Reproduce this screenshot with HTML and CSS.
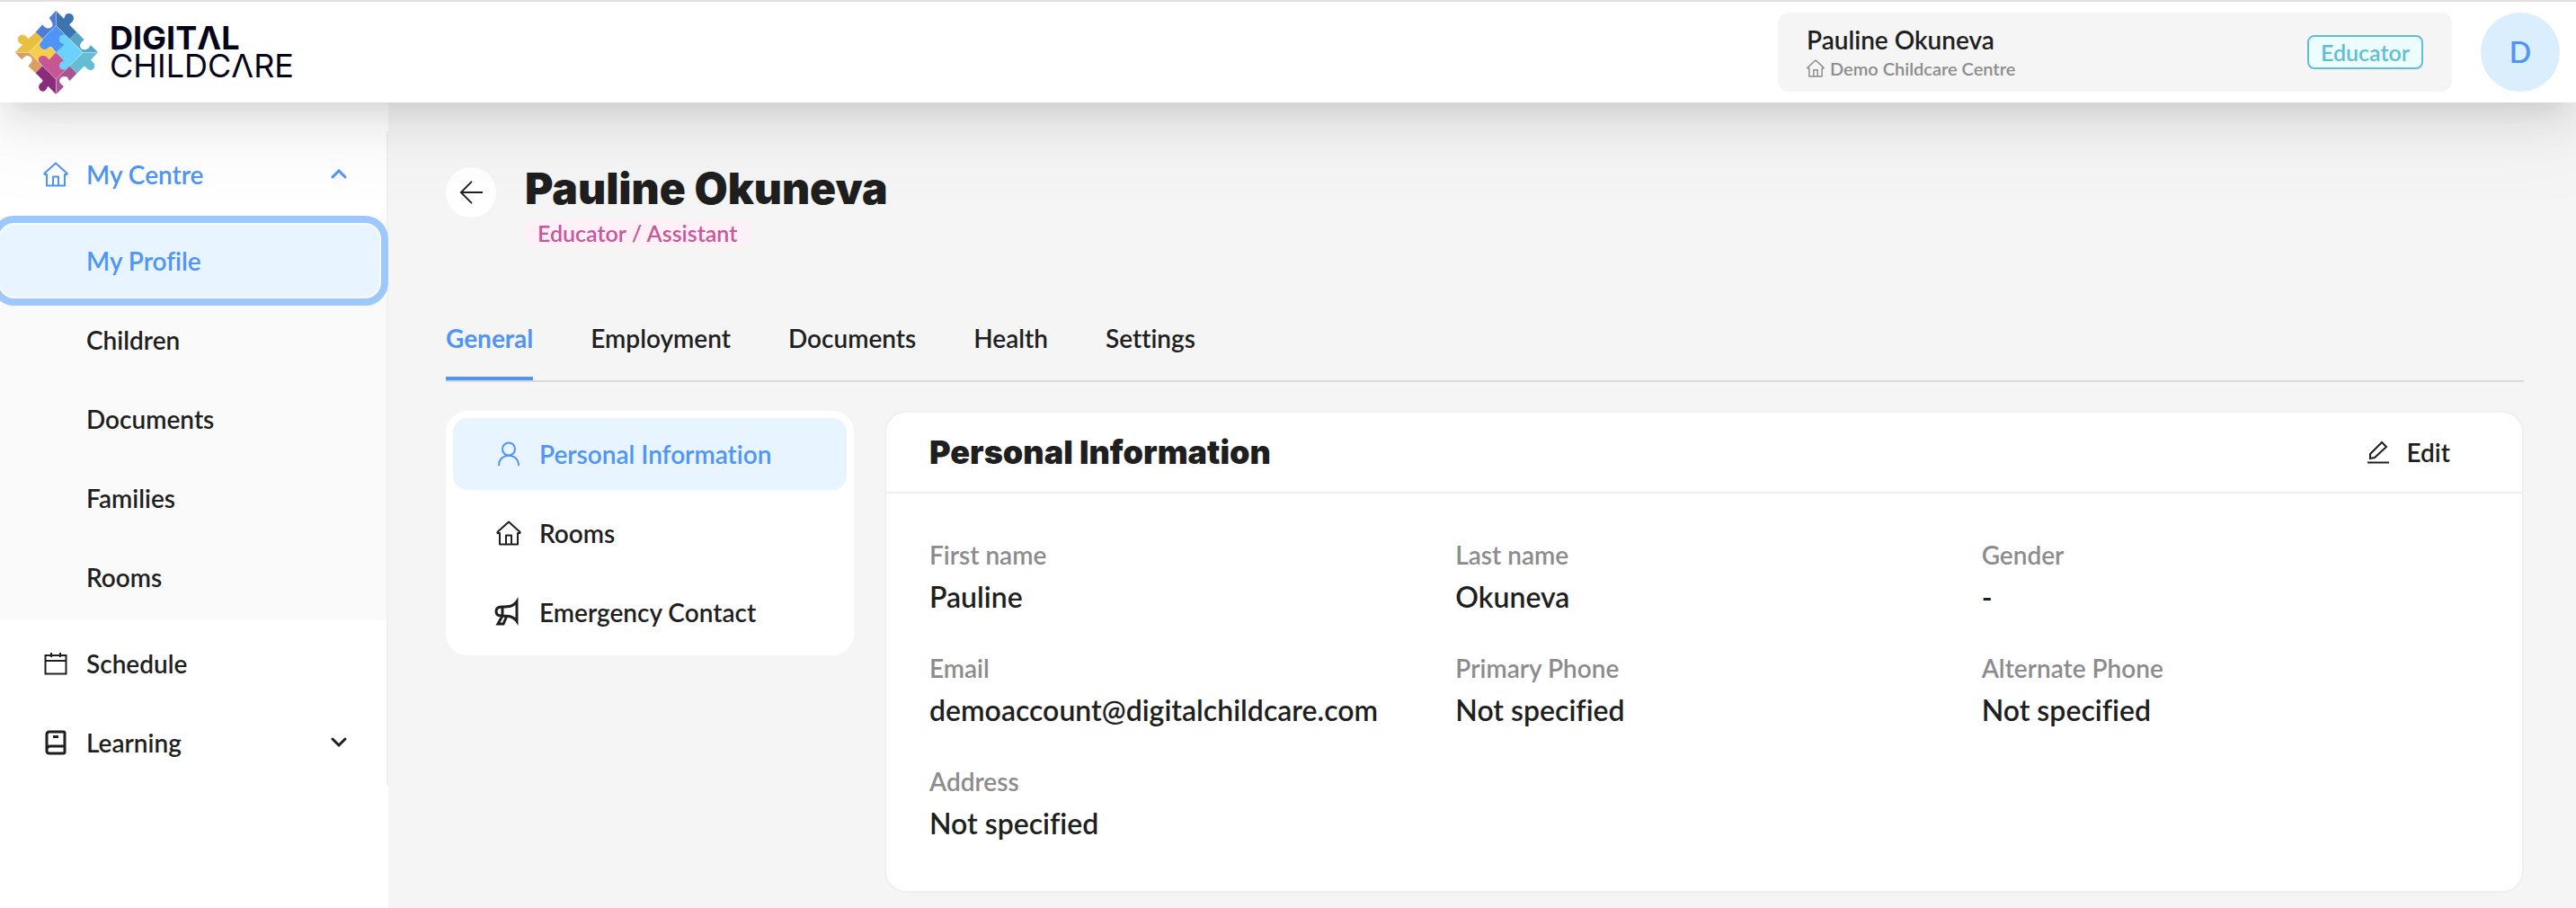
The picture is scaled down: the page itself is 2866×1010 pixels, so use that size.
FILE: index.html
```
<!DOCTYPE html>
<html lang="en">

<head>
  <meta charset="UTF-8">
  <meta name="viewport" content="width=device-width, initial-scale=1.0">
  <title>Digital Childcare - My Profile</title>
  <link rel="stylesheet" href="styles.css">
</head>

<body>

  <!-- shared icons -->
  <svg class="icon-defs" aria-hidden="true">
    <symbol id="icon-home" viewBox="0 0 28 28">
      <path d="M1.5 14v-1.200L14 1.500l12.500 11.300V14h-2.500v12.500H4V14zM11 26v-9.500h6V26" fill="none" stroke="currentColor" stroke-width="2" stroke-linejoin="round" />
    </symbol>
  </svg>

  <header class="header">
    <a href="#" class="logo">
      <svg class="logo-mark" viewBox="18 18 282 282" aria-hidden="true">
        <path fill="#4f7bd9" d="M157 20V70L112 115L89 92L112 67C118 78 130 84 142 76C150 68 144 58 134 45Z" />
        <path fill="#3d74b0" d="M157 20L183 47C188 44 184 30 200 30C216 30 220 48 212 57C208 62 203 64 202 68L226 92L202 115L157 70Z" />
        <path fill="#4f95f7" d="M157 70L202 115L195 140L157 160L142 142C136 138 132 150 118 151C104 150 98 138 104 128C108 122 113 122 112 115Z" />
        <path fill="#57a5c4" d="M226 92L202 115L247 160H297L273 136C268 144 262 152 250 151C238 148 234 138 240 128C245 122 250 120 250 116Z" />
        <path fill="#64bdd2" d="M247 160H297L273 185C276 190 287 194 286 206C284 220 268 222 260 214C256 208 254 206 250 207L226 230L202 205Z" />
        <path fill="#e7c043" d="M20 160H67L112 115L89 92L68 112C62 118 60 100 44 101C30 102 26 118 33 127C38 132 46 132 44 136Z" />
        <path fill="#f8cd4e" d="M67 160L112 115C112 122 98 126 104 140C110 152 124 152 130 146C136 140 138 138 142 145L157 160L136 184L112 205Z" />
        <path fill="#d99e60" d="M20 160H67L112 205L89 229L65 206C66 200 78 196 77 184C74 170 58 168 50 176C44 182 46 184 42 183Z" />
        <path fill="#c75794" d="M157 160L202 205L157 250L112 205C108 196 96 192 99 180C104 168 122 168 128 178C130 184 136 184 136 182Z" />
        <path fill="#6ad2fb" d="M202 115L247 160L202 205C200 212 192 218 182 218C168 216 164 203 172 194C178 188 184 190 184 186L157 160L184 134C180 128 168 130 167 116C168 102 180 98 190 104C196 108 194 114 202 115Z" />
        <path fill="#8b2b7c" d="M112 205L157 250V300L131 273C126 274 128 288 113 290C98 288 96 272 104 264C110 260 114 258 112 252L89 229Z" />
        <path fill="#a65493" d="M202 205L226 230L203 254C196 252 200 240 186 240C170 240 164 254 172 264C178 270 182 270 182 275L157 300V250Z" />
        <path fill="none" stroke="white" stroke-opacity="0.5" stroke-width="2" d="M157 20V70L67 160H20M157 70L247 160H297M67 160L157 250V300M247 160L157 250" />
      </svg>
      <span class="logo-text"><strong>DIGITΛL</strong><span>CHILDCΛRE</span></span>
    </a>

    <div class="header-user">
      <div class="user-card">
        <div>
          <div class="user-name">Pauline Okuneva</div>
          <div class="user-centre"><svg><use href="#icon-home" /></svg>Demo Childcare Centre</div>
        </div>
        <span class="badge">Educator</span>
      </div>
      <button type="button" class="avatar">D</button>
    </div>
  </header>

  <div class="layout">
    <aside class="sidebar">
      <nav class="menu">
        <button type="button" class="menu-item open">
          <svg class="icon"><use href="#icon-home" /></svg>
          My Centre
          <svg class="caret" viewBox="0 0 18 12"><path d="M2 9l7-7 7 7" /></svg>
        </button>
        <div class="submenu">
          <a href="#" class="menu-item selected">My Profile</a>
          <a href="#" class="menu-item">Children</a>
          <a href="#" class="menu-item">Documents</a>
          <a href="#" class="menu-item">Families</a>
          <a href="#" class="menu-item">Rooms</a>
        </div>
        <a href="#" class="menu-item">
          <svg class="icon" viewBox="0 0 28 28"><path d="M2.500 5h23v20.500h-23zM2.500 11h23M9 2v5M19 2v5" /></svg>
          Schedule
        </a>
        <button type="button" class="menu-item">
          <svg class="icon bold" viewBox="0 0 28 28"><path d="M7 2h15.500q1.500 0 1.500 1.500v21q0 1.500-1.500 1.500H7q-3 0-3-3V5q0-3 3-3zM4 22q0-4 4-4h16M11 7.500h6" /></svg>
          Learning
          <svg class="caret" viewBox="0 0 18 12"><path d="M2 2l7 7 7-7" /></svg>
        </button>
      </nav>
    </aside>

    <main class="content">
      <div class="page-header">
        <button type="button" class="back" aria-label="Back">
          <svg viewBox="0 0 28 28"><path d="M28 14H2M15 1L2 14 15 27" /></svg>
        </button>
        <div>
          <h1>Pauline Okuneva</h1>
          <span class="tag">Educator / Assistant</span>
        </div>
      </div>

      <nav class="tabs">
        <a href="#" class="tab active">General</a>
        <a href="#" class="tab">Employment</a>
        <a href="#" class="tab">Documents</a>
        <a href="#" class="tab">Health</a>
        <a href="#" class="tab">Settings</a>
      </nav>

      <div class="panels">
        <nav class="side-card">
          <a href="#" class="side-item selected">
            <svg class="icon" viewBox="0 0 28 28"><circle cx="14" cy="8.500" r="7" /><path d="M3 27c0-15 22-15 22 0" /></svg>
            Personal Information
          </a>
          <a href="#" class="side-item">
            <svg class="icon"><use href="#icon-home" /></svg>
            Rooms
          </a>
          <a href="#" class="side-item">
            <svg class="icon bold" viewBox="0 0 28 28"><path d="M23 2v22C19 18 13 18 6 18q-6 0-6-5t6-5c8 0 13 0 17-6zM7 8v10M7 18L2 27h6l4-9" /></svg>
            Emergency Contact
          </a>
        </nav>

        <section class="info-card">
          <div class="info-head">
            <h2>Personal Information</h2>
            <button type="button" class="edit">
              <svg viewBox="0 0 26 26"><path d="M1 24.500h24M4 20v-5L17 2l5 5L9 19z" /></svg>
              Edit
            </button>
          </div>
          <dl class="fields">
            <div><dt>First name</dt><dd>Pauline</dd></div>
            <div><dt>Last name</dt><dd>Okuneva</dd></div>
            <div><dt>Gender</dt><dd>-</dd></div>
            <div><dt>Email</dt><dd>demoaccount@digitalchildcare.com</dd></div>
            <div><dt>Primary Phone</dt><dd>Not specified</dd></div>
            <div><dt>Alternate Phone</dt><dd>Not specified</dd></div>
            <div><dt>Address</dt><dd>Not specified</dd></div>
          </dl>
        </section>
      </div>
    </main>
  </div>

</body>

</html>
```
FILE: styles.css
```
* {
  box-sizing: border-box;
}

body {
  margin: 0;
  min-height: 100vh;
  display: flex;
  flex-direction: column;
  font-family: Lato, "Open Sans", sans-serif;
  font-size: 28px;
  font-weight: 600;
  font-variant-ligatures: no-common-ligatures;
  line-height: 44px;
  color: #1f1f1f;
  background-color: #f5f5f5;
}

a {
  color: inherit;
  text-decoration: none;
}

button {
  font: inherit;
  color: inherit;
  background: none;
  border: none;
  padding: 0;
  cursor: pointer;
}

.icon-defs {
  display: none;
}

.icon {
  width: 28px;
  height: 28px;
  flex: none;
  fill: none;
  stroke: currentColor;
  stroke-width: 2;
  overflow: visible;
}

.icon.bold {
  stroke-width: 3;
}

/* Header */
.header {
  position: relative;
  z-index: 1;
  display: flex;
  justify-content: space-between;
  align-items: center;
  padding: 12px 18px 12px 16px;
  border-top: 2px solid #e0e0e0;
  background-color: white;
  box-shadow: 0 12px 32px -16px rgba(0, 0, 0, 0.12), 0 18px 56px rgba(0, 0, 0, 0.1), 0 24px 96px 32px rgba(0, 0, 0, 0.03);
}

.logo {
  display: flex;
  align-items: center;
  gap: 12px;
}

.logo-mark {
  width: 94px;
  height: 94px;
  margin: -3px 0;
}

.logo-text {
  display: flex;
  flex-direction: column;
  font-family: Inter, sans-serif;
  font-size: 36px;
  font-weight: 400;
  line-height: 31px;
  color: #05051a;
}

.header-user {
  display: flex;
  gap: 32px;
}

.user-card {
  display: flex;
  justify-content: space-between;
  align-items: center;
  width: 750px;
  height: 88px;
  padding: 0 32px;
  border-radius: 12px;
  background-color: #f5f5f5;
}

.user-name {
  font-size: 28px;
  line-height: 36px;
}

.user-centre {
  display: flex;
  align-items: center;
  gap: 6px;
  font-size: 20px;
  line-height: 28px;
  color: #8c8c8c;
}

.user-centre svg {
  width: 20px;
  height: 20px;
}

.badge {
  padding: 0 13px;
  border: 2px solid #64bdd2;
  border-radius: 8px;
  font-size: 25px;
  line-height: 34px;
  color: #64bdd2;
  background-color: #ecfeff;
}

.avatar {
  width: 88px;
  height: 88px;
  border-radius: 50%;
  font-size: 32px;
  color: #4f95f7;
  background-color: #dbeefd;
}

/* Sidebar */
.layout {
  flex: 1;
  display: flex;
}

.sidebar {
  width: 432px;
  flex: none;
  padding-top: 32px;
  background-color: white;
}

.menu {
  display: flow-root;
  border-right: 2px solid #f0f0f0;
}

.menu-item {
  display: flex;
  align-items: center;
  gap: 20px;
  width: 100%;
  height: 80px;
  margin: 8px 0;
  padding: 0 44px 0 48px;
}

.menu-item.open {
  color: #4f95f7;
}

.caret {
  width: 18px;
  height: 12px;
  margin-left: auto;
  fill: none;
  stroke: currentColor;
  stroke-width: 3;
  stroke-linecap: round;
}

.submenu {
  display: flow-root;
  background-color: #fafafa;
}

.submenu .menu-item {
  padding-left: 96px;
}

.submenu .selected {
  width: 422px;
  border-radius: 16px;
  color: #4f95f7;
  background-color: #e8f4ff;
  outline: 8px solid #9dc8fb;
  outline-offset: 2px;
}

/* Page */
.content {
  flex: 1;
  min-width: 0;
  padding: 64px 58px 16px 64px;
}

.page-header {
  display: flex;
  gap: 32px;
}

.back {
  display: flex;
  align-items: center;
  justify-content: center;
  width: 56px;
  height: 56px;
  margin-top: 8px;
  border-radius: 50%;
  background-color: white;
}

.back svg,
.edit svg {
  width: 26px;
  height: 26px;
  fill: none;
  stroke: currentColor;
  stroke-width: 2;
  overflow: visible;
}

h1,
h2 {
  margin: 0;
  font-family: Inter, sans-serif;
  font-weight: 900;
}

h1 {
  font-size: 48px;
  line-height: 64px;
}

.tag {
  display: block;
  width: fit-content;
  margin-top: 2px;
  padding: 0 14px;
  border-radius: 8px;
  font-size: 25px;
  line-height: 30px;
  color: #c9589a;
  background-color: #fdf0f7;
}

.tabs {
  display: flex;
  gap: 64px;
  margin: 62px 0 32px;
  border-bottom: 2px solid #d9d9d9;
}

.tab {
  padding: 18px 0 21px;
  border-bottom: 4px solid transparent;
}

.tab.active {
  font-weight: 700;
  color: #4f95f7;
  border-color: #4f95f7;
}

.panels {
  display: flex;
  align-items: flex-start;
  gap: 34px;
}

.side-card {
  display: flex;
  flex-direction: column;
  gap: 8px;
  width: 454px;
  flex: none;
  padding: 8px;
  border-radius: 24px;
  background-color: white;
}

.side-item {
  display: flex;
  align-items: center;
  gap: 20px;
  height: 80px;
  padding: 0 48px;
  border-radius: 16px;
}

.side-item.selected {
  color: #4f95f7;
  background-color: #e8f4ff;
}

.info-card {
  flex: 1;
  border: 2px solid #f0f0f0;
  border-radius: 24px;
  background-color: white;
}

.info-head {
  display: flex;
  justify-content: space-between;
  align-items: center;
  height: 90px;
  padding: 0 80px 0 48px;
  border-bottom: 2px solid #f0f0f0;
}

h2 {
  font-size: 36px;
}

.edit {
  display: flex;
  align-items: center;
  gap: 18px;
}

.fields {
  display: grid;
  grid-template-columns: repeat(3, 1fr);
  gap: 32px;
  margin: 0;
  padding: 46px 48px 50px;
}

dt {
  color: #8c8c8c;
}

dd {
  margin: 0;
  font-size: 32px;
  line-height: 50px;
}
```
